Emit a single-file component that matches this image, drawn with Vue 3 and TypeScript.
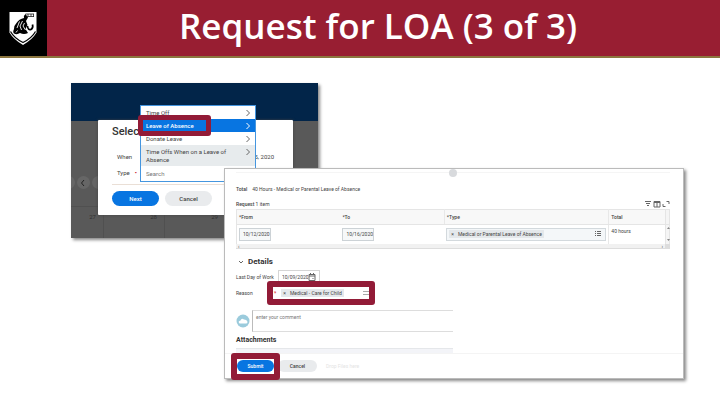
<script setup lang="ts">
import { ref } from 'vue'

interface Option { label: string; state: string }

const options: Option[] = [
  { label: 'Time Off', state: '' },
  { label: 'Leave of Absence', state: 'active' },
  { label: 'Donate Leave', state: '' },
  { label: 'Time Offs When on a Leave of Absence', state: 'hover' },
]
const days: string[] = ['27', '28', '29', '']
const fromDate = ref('10/12/2020')
const toDate = ref('10/16/2020')
const lastDay = ref('10/09/2020')
const search = ref('')
const comment = ref('')
</script>

<template>
  <div class="slide">
    <header class="banner">
      <div class="logo">
        <svg viewBox="0 0 28 36" aria-hidden="true">
          <path d="M.5 1H27.500V21.500Q24 28 14 34Q4 28 .5 21.500Z" fill="#fff" />
          <path d="M1.500 20.500Q5 27 14 31.500Q23 27 26.500 20.500" fill="none" stroke="#000" stroke-width="1.200" />
          <path d="M16.500 3Q14 5 15 7Q10 8 7.500 12Q4.500 15 5 18Q3.500 21 5 22.500Q8 24 11 22Q15 24 19 22L16.500 18L18.500 14L17 10L19 6.500Z" fill="#000" />
          <path d="M10.500 10.500L8 17M13.500 10L11 15L12.500 19M15.500 12L14 15L16.500 19M8.500 19.500L7 21.500" fill="none" stroke="#fff" stroke-width=".9" />
          <path d="M16.500 3H25M17.500 5.500H25M19 3V5.500M22 3V5.500M24.500 3V6" fill="none" stroke="#222" stroke-width=".8" />
          <path d="M18.500 15Q19 19.500 22 18.500Q24.500 17 23.500 13.500" fill="none" stroke="#000" stroke-width="1.700" />
        </svg>
      </div>
      <h1>Request for LOA (3 of 3)</h1>
    </header>

    <main class="stage">
      <section class="back">
        <div class="navy"></div>
        <div class="calendar">
          <div class="pager"><span></span><span><svg viewBox="0 0 6 8"><path d="M4 1L1.500 4L4 7" /></svg></span><span></span></div>
          <div class="days"><span v-for="(day, i) in days" :key="i">{{ day }}</span></div>
        </div>
        <div class="dialog">
          <h2>Select</h2>
          <div class="line when"><span>When</span><span class="date">5, 2020</span></div>
          <div class="line"><label for="type-search">Type</label><b>•</b></div>
          <div class="actions">
            <button class="pill primary">Next</button>
            <button class="pill">Cancel</button>
          </div>
        </div>
        <div class="menu">
          <button v-for="option in options" :key="option.label" class="option" :class="option.state">
            <span>{{ option.label }}</span>
            <svg viewBox="0 0 6 8"><path d="M1.500 1L4.500 4L1.500 7" /></svg>
          </button>
          <input id="type-search" v-model="search" placeholder="Search" />
        </div>
      </section>

      <section class="front">
        <span class="handle"></span>
        <div class="body">
          <p class="total"><b>Total</b><span>40 Hours - Medical or Parental Leave of Absence</span></p>
          <div class="caption">
            <span><b>Request</b> 1 item</span>
            <span class="tools">
              <svg viewBox="0 0 8 8"><path d="M1 1.500H7M2 3.500H6M3 5.500H5" /></svg>
              <svg viewBox="0 0 8 8"><path d="M1 1.500H7V7H1ZM1 2.500H7M4 2V7" /></svg>
              <svg viewBox="0 0 8 8"><path d="M4.500 1.500H7V4M3.500 6.500H1V4" /></svg>
            </span>
          </div>
          <table>
            <colgroup><col class="c-from" /><col class="c-to" /><col class="c-type" /><col class="c-total" /><col /></colgroup>
            <thead><tr><th>*From</th><th>*To</th><th class="ruled">*Type</th><th class="ruled">Total</th><th class="rail"></th></tr></thead>
            <tbody>
              <tr>
                <td><input v-model="fromDate" class="date-box" aria-label="From" /></td>
                <td><input v-model="toDate" class="date-box" aria-label="To" /></td>
                <td>
                  <div class="picker">
                    <span class="chip"><i>×</i>Medical or Parental Leave of Absence</span>
                    <svg viewBox="0 0 8 8"><path d="M1 1.500H2M3 1.500H7M1 3.500H2M3 3.500H7M1 5.500H2M3 5.500H7" /></svg>
                  </div>
                </td>
                <td class="hours ruled">40 hours</td>
                <td class="rail"><svg viewBox="0 0 5 18"><path d="M1 4L2.500 2L4 4ZM1 14L2.500 16L4 14Z" /></svg></td>
              </tr>
            </tbody>
          </table>
          <div class="scrollbar"><span>‹</span><span class="end">›</span><span class="corner"></span></div>

          <h2><svg viewBox="0 0 6 8"><path d="M1 3L3 5L5 3" /></svg>Details</h2>
          <div class="field">
            <label for="last-day">Last Day of Work</label>
            <div class="day-box">
              <input id="last-day" v-model="lastDay" />
              <svg viewBox="0 0 8 8"><path d="M1 1.500H7V7.500H1ZM1 3H7M2.500 0V2M5.500 0V2M4.500 5.500H5.500" /></svg>
            </div>
          </div>
          <div class="field reason">
            <span>Reason</span>
            <div class="reason-box">
              <b>*</b>
              <span class="chip"><i>×</i>Medical - Care for Child</span>
              <svg viewBox="0 0 8 8"><path d="M2 2.500H8M2 5.500H8" /></svg>
            </div>
          </div>
          <div class="comment">
            <svg viewBox="0 0 14 14"><circle cx="7" cy="7" r="6.500" fill="#9bcbdc" /><path d="M3.500 9.500Q1.500 7 4.500 6.500Q5.500 3.500 8 5.500Q11 5.500 11.500 8Q11.500 9.500 10 9.500Z" fill="#fff" /></svg>
            <textarea v-model="comment" aria-label="Comment" placeholder="enter your comment"></textarea>
          </div>
          <h3>Attachments</h3>
          <div class="dropzone"></div>
        </div>
        <footer>
          <div class="submit"><button class="pill primary">Submit</button></div>
          <button class="pill">Cancel</button>
          <span class="ghost">Drop Files here</span>
        </footer>
      </section>
    </main>
  </div>
</template>

<style>
body { margin: 0; background: #fff; }
</style>

<style scoped>
*, *::before, *::after { box-sizing: border-box; }
.slide { min-height: 100vh; overflow: hidden; font: 5px/8px Roboto, "Liberation Sans", sans-serif; color: #444; }
h1, h2, h3, p { margin: 0; }
button, input, textarea { font: inherit; color: inherit; margin: 0; padding: 0; border: 0; background: none; border-radius: 0; }
svg { display: block; flex: none; fill: none; stroke: #666; stroke-width: 1; }
input { display: block; min-width: 0; }

.banner { display: flex; height: 58px; background: #981e32; border-bottom: 2px solid #8c763f; }
.logo { width: 47px; background: #000; padding: 11px 9px; flex: none; }
.logo svg { width: 28px; height: 36px; stroke: none; }
h1 { flex: 1; padding-right: 11px; text-align: center; font: 600 35px/52px "Open Sans", "Noto Sans", sans-serif; color: #fff; }

.stage { display: grid; grid-template-columns: 71px 153px 94px minmax(0, 1fr) 36px; grid-template-rows: 25px 85px 70px auto; }
.back { grid-area: 2 / 2 / 4 / 4; position: relative; display: flex; flex-direction: column; background: #595959; box-shadow: 2px 2px 3px #888; }
.navy { height: 38px; background: #022549; }
.calendar { flex: 1; display: flex; flex-direction: column; justify-content: space-between; overflow: hidden; }
.pager { display: flex; gap: 2px; margin: 55px 0 0 -9px; }
.pager span { width: 13px; height: 13px; padding: 3px; border-radius: 50%; background: #666; }
.pager svg { width: 6px; height: 8px; stroke: #222; }
.days { display: grid; grid-template-columns: 33px 61px 61px 1fr; height: 32px; border-top: 1px solid #505050; }
.days span { padding: 6px 7px; text-align: right; border-right: 1px solid #505050; font-size: 6px; color: #303030; }
.dialog { position: absolute; left: 27px; top: 37px; width: 195px; height: 95px; padding: 5px 14px; background: #fff; border-radius: 1px; box-shadow: 0 0 3px #444; }
.dialog h2 { font-size: 11px; font-weight: 500; line-height: 14px; color: #333; }
.line { display: flex; gap: 5px; padding-left: 5px; font-size: 6px; line-height: 16px; }
.line b { color: #c33; }
.when { margin-top: 10px; }
.date { margin-left: auto; margin-right: 5px; }
.actions { display: flex; gap: 6px; margin-top: 3px; padding-top: 6px; border-top: 1px solid #eadfd6; }
.pill { width: 39px; height: 12px; border-radius: 8px; background: #e9ebed; font-weight: 500; text-align: center; }
.actions .pill { width: 47px; height: 15px; font-size: 6px; }
.pill.primary { background: #0875e1; color: #fff; }
.menu { position: absolute; left: 69px; top: 22px; width: 116px; background: #fff; border: 1px solid #4596df; font-size: 6px; }
.option { position: relative; display: flex; width: 100%; justify-content: space-between; align-items: center; padding: 3px 4px 2px 5px; text-align: left; line-height: 8px; }
.option span { width: 84px; }
.option svg { width: 6px; height: 8px; }
.option.active { z-index: 1; background: #0875e1; color: #fff; font-weight: 500; }
.option.active svg { stroke: #fff; }
.option.active::after { content: ""; position: absolute; left: -3px; top: -4px; width: 73px; height: 21px; border: 5px solid #921b37; border-radius: 3px; }
.option.hover { padding: 3px 4px 2px 5px; background: #e7ebed; }
.option.hover svg { align-self: flex-start; }
.menu input { width: 100%; height: 15px; padding-left: 5px; }
::placeholder { color: #777; opacity: 1; }

.front { grid-area: 3 / 3 / 5 / 5; position: relative; height: 211px; display: flex; flex-direction: column; background: #fff; border: 1px solid #bbb; box-shadow: 2px 2px 3px #888; }
.handle { position: absolute; top: 0; left: 50%; width: 8px; height: 8px; margin-left: -5px; border-radius: 50%; background: #d8dadd; }
.body { flex: 1; margin: 3px 13px 0 11px; padding-top: 12px; border-top: 1px solid #f5f5f5; }
.total { display: flex; gap: 5px; }
.total b, .caption b { font-weight: 500; }
.caption { display: flex; justify-content: space-between; margin-top: 7px; margin-bottom: 1px; }
.tools { display: flex; gap: 1px; }
.tools svg { width: 8px; height: 8px; }
table { width: 100%; table-layout: fixed; border-collapse: collapse; border: 1px solid #e5e5e5; border-bottom: 0; }
.c-from { width: 24%; }
.c-to { width: 24%; }
.c-type { width: 38%; }
.c-total { width: 13%; }
th { height: 15px; padding: 0 2px; text-align: left; font-weight: 500; background: #f8f8f8; border-bottom: 1px solid #e5e5e5; }
td { height: 19px; padding: 0 2px; }
.ruled { border-left: 1px solid #e8e8e8; }
td.hours { padding-top: 2px; vertical-align: top; }
.rail { padding: 0; background: #f5f5f5; border-left: 1px solid #e5e5e5; }
.rail svg { width: 5px; height: 18px; stroke: none; fill: #888; }
.date-box { width: 32px; height: 13px; padding-left: 3px; background: #f6f8f9; border: 1px solid #ccd2d6; }
.picker { display: flex; align-items: center; justify-content: space-between; height: 13px; padding: 0 3px 0 2px; background: #f4f7f9; border: 1px solid #d3d9dd; }
.picker svg, .reason-box svg { width: 8px; height: 8px; }
.chip { padding: 0 2px; background: #e4e8eb; white-space: nowrap; }
.chip i { margin-right: 4px; font-style: normal; }
.scrollbar { display: flex; gap: 2px; height: 5px; line-height: 4px; padding-left: 2px; background: #f1f1f1; border-bottom: 1px solid #ddd; }
.end { margin-left: auto; }
.corner { width: 5px; background: #ddd; }
.body h2 { display: flex; align-items: center; gap: 4px; margin-top: 7px; padding-left: 2px; font-size: 8px; line-height: 12px; color: #333; }
.body h2 svg { width: 6px; height: 8px; }
.field { display: flex; align-items: center; margin-top: 2px; }
.field > :first-child { width: 42px; white-space: nowrap; }
.day-box { display: flex; align-items: center; width: 42px; height: 14px; padding: 0 3px; border: 1px solid #d5d5d5; }
.day-box input { width: 28px; }
.day-box svg { width: 8px; height: 8px; }
.field.reason { margin-top: -3px; }
.field.reason > :first-child { width: 31px; }
.reason-box { position: relative; display: flex; align-items: center; gap: 5px; width: 108px; height: 24px; padding: 0 0 0 1px; border: 6px solid #921b37; border-radius: 3px; background: #fff; }
.reason-box b { color: #d33; }
.reason-box svg { margin-left: auto; stroke: #aaa; }
.comment { display: flex; align-items: center; gap: 2px; width: 50%; margin-top: 5px; }
.comment svg { width: 14px; height: 14px; stroke: none; }
textarea { flex: 1; min-width: 0; height: 22px; padding: 2px 3px; border: 1px solid #ddd; border-left-color: #bbb; border-right: 0; resize: none; }
h3 { margin-top: 3px; font-size: 7px; line-height: 11px; color: #333; }
.dropzone { width: 50%; height: 5px; margin-top: 2px; background: #f3f4f8; border-top: 1px solid #e5e7ea; }
footer { display: flex; align-items: center; height: 25px; padding-left: 12px; border-top: 1px solid #f4f4f4; }
.submit { position: relative; margin-right: 4px; display: flex; }
.submit .pill { width: 37px; }
.submit::after { content: ""; position: absolute; inset: -7px -6px -8px -6px; border: 6px solid #921b37; border-radius: 3px; }
.ghost { margin-left: 9px; color: #e4e4e4; }
</style>
